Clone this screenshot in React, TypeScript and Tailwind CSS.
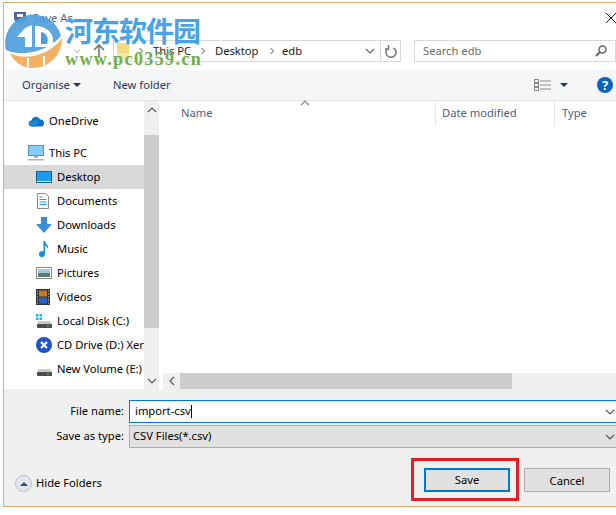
import type { ReactNode } from 'react'

const FONT = "font-['Noto_Sans','Open_Sans',sans-serif]"

function Chevron({ className = '' }: { className?: string }) {
  return (
    <svg viewBox="0 0 8 8" className={`h-2 w-2 shrink-0 ${className}`} fill="none" stroke="currentColor" strokeWidth="1">
      <path d="M2.500 1l3 3-3 3" />
    </svg>
  )
}

function DownChevron({ className = '' }: { className?: string }) {
  return (
    <svg viewBox="0 0 10 6" className={`h-[6px] w-[10px] shrink-0 ${className}`} fill="none" stroke="currentColor" strokeWidth="1.200">
      <path d="M1 1l4 4 4-4" />
    </svg>
  )
}

function Caret({ className = '' }: { className?: string }) {
  return (
    <svg viewBox="0 0 8 4" className={`h-1 w-2 shrink-0 ${className}`} fill="currentColor">
      <path d="M0 0h8L4 4z" />
    </svg>
  )
}

const CloudIcon = () => (
  <svg viewBox="0 0 16 12" className="h-3 w-4">
    <path d="M4 11.500a3 3 0 0 1-.5-6A4.500 4.500 0 0 1 12 4.500a3.500 3.500 0 0 1 4 3.500 3.500 3.500 0 0 1-3.500 3.500z" fill="#0e70c0" />
    <path d="M1 9.500a3 3 0 0 1 3.500-3 4 4 0 0 1 7 1L8 11.500H4A3 3 0 0 1 1 9.500z" fill="#1a86d6" />
  </svg>
)

const MonitorIcon = () => (
  <svg viewBox="0 0 16 16" className="h-4 w-4">
    <rect x="0.500" y="0.500" width="15" height="10" fill="#7fd0f7" stroke="#5f93b3" />
    <rect x="6" y="11" width="4" height="2" fill="#9db5c4" />
    <rect x="0" y="14" width="16" height="1.500" fill="#a9b7c2" />
  </svg>
)

const DesktopIcon = () => (
  <svg viewBox="0 0 16 12" className="h-3 w-4">
    <rect x="0.500" y="0.500" width="15" height="11" fill="#1b9af0" stroke="#14608f" />
    <rect x="1" y="10" width="14" height="1" fill="#e3f3fd" />
  </svg>
)

const DocumentsIcon = () => (
  <svg viewBox="0 0 14 16" className="h-4 w-[14px]">
    <path d="M1.500 0.500h8l3 3v12h-11z" fill="#fff" stroke="#8a8a8a" />
    <path d="M3.500 4h3M3.500 6.500h7M3.500 9h7M3.500 11.500h7" stroke="#2b9ad8" strokeWidth="1" />
  </svg>
)

const DownloadsIcon = () => (
  <svg viewBox="0 0 16 16" className="h-4 w-4">
    <path d="M5 0h6v7h5l-8 9-8-9h5z" fill="#3b8fd9" />
  </svg>
)

const MusicIcon = () => (
  <svg viewBox="0 0 16 16" className="h-4 w-4">
    <path d="M7.500 0h1.500c.5 3 4 4 3 8-.5-2-2-3-3-3.500V13a3 3 0 1 1-1.500-2.500z" fill="#1090e0" />
  </svg>
)

const PicturesIcon = () => (
  <svg viewBox="0 0 16 12" className="h-3 w-4">
    <rect x="0.500" y="0.500" width="15" height="11" fill="#fff" stroke="#8a8a8a" />
    <rect x="2" y="2" width="12" height="4" fill="#a9c6d8" />
    <rect x="2" y="6" width="12" height="4" fill="#55806a" />
  </svg>
)

const VideosIcon = () => (
  <svg viewBox="0 0 14 16" className="h-4 w-[14px]">
    <rect width="14" height="16" fill="#333" />
    <rect x="3" y="1.500" width="8" height="6" fill="#c57a2a" />
    <rect x="3" y="8.500" width="8" height="6" fill="#2a63c5" />
    <path d="M1 2h1M1 5h1M1 8h1M1 11h1M1 14h1M12 2h1M12 5h1M12 8h1M12 11h1M12 14h1" stroke="#ddd" strokeWidth="1.200" />
  </svg>
)

const DiskIcon = ({ windows = false }: { windows?: boolean }) => (
  <svg viewBox="0 0 16 14" className="h-[14px] w-4">
    {windows && <path d="M0 0h2.500v2.500H0zM3.500 0H6v2.500H3.500zM0 3.500h2.500V6H0zM3.500 3.500H6V6H3.500z" fill="#1fb0e8" />}
    <path d="M3 7h11l2 3H1z" fill="#c9c9c9" />
    <rect x="1" y="10" width="15" height="4" rx="1" fill="#4c4c4c" />
    <rect x="11" y="11.500" width="2" height="1" fill="#4fdc5a" />
  </svg>
)

const XeroIcon = () => (
  <svg viewBox="0 0 16 16" className="h-4 w-4">
    <circle cx="8" cy="8" r="8" fill="#2053c8" />
    <path d="M5 5l6 6M11 5l-6 6" stroke="#fff" strokeWidth="2.200" />
  </svg>
)

function NavRow({
  icon,
  label,
  indent = 'sub',
  selected = false,
}: {
  icon: ReactNode
  label: string
  indent?: 'root' | 'sub'
  selected?: boolean
}) {
  return (
    <div className={`flex h-6 items-center overflow-hidden ${indent === 'root' ? 'pl-6' : 'pl-8'} ${selected ? 'bg-[#d9d9d9]' : ''}`}>
      <span className="flex w-[21px] shrink-0 items-center">{icon}</span>
      <span className="whitespace-nowrap text-black">{label}</span>
    </div>
  )
}

// site watermark pasted over the top-left corner of the screenshot
function Watermark() {
  return (
    <div className="pointer-events-none absolute left-[4px] top-[14px] flex items-start gap-[3px]">
      <svg viewBox="0 0 58 54" className="h-[54px] w-[58px]">
        <path d="M2 36A28 28 0 1 1 57 22C45 36 20 44 2 36z" fill="#4f9fdb" fillOpacity="0.92" />
        <path d="M13 23l8-9 7-3v22h-7V23z" fill="#fff" />
        <path d="M31 12c14 0 21 10 17 21H31z" fill="#fff" />
        <path d="M37 18c6 1 8 7 6 12h-6z" fill="#4f9fdb" />
        <path d="M6 39C20 47 45 42 58 24 58 42 44 54 29 54 18 54 10 48 6 39z" fill="#f2ab55" fillOpacity="0.92" />
        <path d="M23 44h2v9h-2zM39 42h2v9h-2z" fill="#fff" />
      </svg>
      <div className="flex flex-col">
        <span className="text-[28px] font-bold leading-[32px] tracking-[-1px] text-[#49a2e3] font-['Noto_Sans_CJK_SC',sans-serif]">河东软件园</span>
        <span className="mt-[4px] text-[18px] font-bold leading-[18px] tracking-[1.4px] text-[#6eaf45] font-['Liberation_Serif',serif]">www.pc0359.cn</span>
      </div>
    </div>
  )
}

export default function App() {
  return (
    <div className={`relative h-[515px] w-[616px] overflow-hidden bg-white pl-[3px] pt-[2px] text-[11.2px] ${FONT}`}>
      <div className="flex h-[505px] flex-col border-b border-l border-t border-[#e3ad6c] bg-white">
        {/* title bar */}
        <div className="flex h-[37px] items-start pl-[9px] pt-[7px]">
          <svg viewBox="0 0 14 14" className="mt-[1px] h-[14px] w-[14px]">
            <path d="M1 1h12v6c0 3-3 5-6 6-3-1-6-3-6-6z" fill="#4b6b9a" />
            <path d="M4 3h6v3H4z" fill="#fff" />
          </svg>
          <span className="ml-[6px] text-[#5b6470]">Save As</span>
          <svg viewBox="0 0 10 10" className="ml-auto mt-[3px] h-[10px] w-[10px]" stroke="#111" strokeWidth="1" fill="none">
            <path d="M0 0l10 10M10 0L0 10" />
          </svg>
        </div>

        {/* address row */}
        <div className="flex h-[22px] items-center">
          <div className="flex w-[109px] shrink-0 items-center justify-end pr-[8px]">
            <Chevron className="mr-[12px] rotate-90 text-[#9a9a9a]" />
            <svg viewBox="0 0 12 14" className="h-[14px] w-3" fill="none" stroke="#6d6d6d" strokeWidth="1.500">
              <path d="M6 14V1M1 6l5-5 5 5" />
            </svg>
          </div>
          <div className="flex h-full w-[288px] shrink-0 items-center border border-[#d9d9d9] bg-white text-[#1a1a1a]">
            <svg viewBox="0 0 12 16" className="ml-[3px] h-4 w-3 shrink-0">
              <rect width="12" height="16" fill="#f7da7f" />
              <rect x="0" y="10" width="12" height="6" fill="#fbe9ac" />
            </svg>
            <Chevron className="ml-[8px] text-[#555]" />
            <span className="ml-[8px] w-[46px] whitespace-nowrap">This PC</span>
            <Chevron className="text-[#555]" />
            <span className="ml-[8px] w-[53px]">Desktop</span>
            <Chevron className="text-[#555]" />
            <span className="ml-[6px]">edb</span>
            <DownChevron className="ml-auto mr-[5px] text-[#666]" />
            <div className="flex h-full w-[20px] items-center justify-center border-l border-[#d9d9d9]">
              <svg viewBox="0 0 12 13" className="h-[13px] w-3" fill="none" stroke="#777" strokeWidth="1.500">
                <path d="M3.500 3A5 5 0 1 0 8.500 3M3.500 0v4H0" />
              </svg>
            </div>
          </div>
          <div className="ml-[13px] flex h-full flex-1 items-center border border-[#d9d9d9] bg-white pl-[8px] pr-[8px] text-[#6d6d6d]">
            <span>Search edb</span>
            <svg viewBox="0 0 12 12" className="ml-auto h-3 w-3" fill="none" stroke="#666" strokeWidth="1.500">
              <circle cx="7.500" cy="4.500" r="3.500" />
              <path d="M5 7l-4 4" strokeWidth="2" />
            </svg>
          </div>
        </div>

        {/* toolbar */}
        <div className="mt-[8px] flex h-[31px] items-center border-b border-[#e5e5e5] bg-[#f5f6f7] pl-[18px] pr-[3px] text-[#1e395b]">
          <span className="w-[51px]">Organise</span>
          <Caret />
          <span className="ml-[32px]">New folder</span>
          <svg viewBox="0 0 17 12" className="ml-auto h-3 w-[17px]" fill="none" stroke="#8a8a8a" strokeWidth="1">
            <rect x="0.500" y="0.500" width="4" height="3" />
            <rect x="0.500" y="4.500" width="4" height="3" />
            <rect x="0.500" y="8.500" width="4" height="3" />
            <path d="M6 2h11M6 6h11M6 10h11" />
          </svg>
          <Caret className="ml-[9px]" />
          <span className="ml-[29px] flex h-4 w-4 items-center justify-center rounded-full bg-[#0a64bf] text-[13px] font-bold leading-none text-white">?</span>
        </div>

        {/* panes */}
        <div className="flex min-h-0 flex-1">
          <div className="flex w-[140px] shrink-0 flex-col overflow-hidden pt-[8px]">
            <NavRow indent="root" icon={<CloudIcon />} label="OneDrive" />
            <div className="h-2 shrink-0" />
            <NavRow indent="root" icon={<MonitorIcon />} label="This PC" />
            <NavRow icon={<DesktopIcon />} label="Desktop" selected />
            <NavRow icon={<DocumentsIcon />} label="Documents" />
            <NavRow icon={<DownloadsIcon />} label="Downloads" />
            <NavRow icon={<MusicIcon />} label="Music" />
            <NavRow icon={<PicturesIcon />} label="Pictures" />
            <NavRow icon={<VideosIcon />} label="Videos" />
            <NavRow icon={<DiskIcon windows />} label="Local Disk (C:)" />
            <NavRow icon={<XeroIcon />} label="CD Drive (D:) Xero" />
            <NavRow icon={<DiskIcon />} label="New Volume (E:)" />
          </div>

          {/* nav scrollbar */}
          <div className="flex w-[15px] shrink-0 flex-col bg-[#f0f0f0]">
            <div className="flex h-[17px] items-center justify-center text-[#555]">
              <DownChevron className="rotate-180" />
            </div>
            <div className="mt-[17px] h-[193px] bg-[#cdcdcd]" />
            <div className="mt-auto flex h-[17px] items-center justify-center text-[#555]">
              <DownChevron />
            </div>
          </div>

          {/* file list */}
          <div className="ml-[4px] flex min-w-0 flex-1 flex-col">
            <div className="relative flex h-[25px] items-center text-[#4c607a]">
              <span className="absolute left-[137px] top-[-1px]">
                <DownChevron className="h-[4px] w-[7px] rotate-180 text-[#888]" />
              </span>
              <div className="flex h-full w-[273px] shrink-0 items-center border-r border-[#e5e5e5] pl-[18px]">Name</div>
              <div className="flex h-full w-[119px] shrink-0 items-center border-r border-[#e5e5e5] pl-[6px]">Date modified</div>
              <div className="pl-[7px]">Type</div>
            </div>
            <div className="flex-1" />
            <div className="flex h-[16px] items-center bg-[#f0f0f0]">
              <div className="flex w-[17px] items-center justify-center text-[#555]">
                <DownChevron className="rotate-90" />
              </div>
              <div className="h-full w-[332px] bg-[#cdcdcd]" />
            </div>
          </div>
        </div>

        {/* bottom form */}
        <div className="flex h-[117px] flex-col bg-[#f0f0f0]">
          <div className="mt-[11px] flex h-[23px] items-center">
            <span className="w-[120px] shrink-0 text-right text-black">File name:</span>
            <div className="ml-[5px] flex h-full flex-1 items-center border-y border-l border-[#0078d7] bg-white pl-[5px] pr-[1px] text-black">
              <span>import-csv</span>
              <span className="h-[13px] w-px bg-black" />
              <DownChevron className="ml-auto text-[#555]" />
            </div>
          </div>
          <div className="mt-[2px] flex h-[23px] items-center">
            <span className="w-[120px] shrink-0 text-right text-black">Save as type:</span>
            <div className="ml-[5px] flex h-full flex-1 items-center border-y border-l border-[#adadad] bg-[#e1e1e1] pl-[3px] pr-[1px] text-black">
              <span>CSV Files(*.csv)</span>
              <DownChevron className="ml-auto text-[#555]" />
            </div>
          </div>
          <div className="mt-[10px] flex items-start pr-[6px]">
            <div className="ml-[11px] mt-[17px] flex items-center">
              <span className="flex h-[17px] w-[17px] items-center justify-center rounded-full border border-[#b5bcc4] bg-[#e3e8ee]">
                <Caret className="rotate-180 text-[#1e4f8f]" />
              </span>
              <span className="ml-[4px] text-black">Hide Folders</span>
            </div>
            <div className="ml-auto flex h-[43px] w-[108px] shrink-0 items-center justify-center border-[3px] border-[#ed1c24] pl-[4px]">
              <div className="flex h-[24px] w-[86px] shrink-0 items-center justify-center border-2 border-[#0078d7] bg-[#e1e1e1] pt-[2px] text-black">Save</div>
            </div>
            <div className="ml-[5px] mt-[10px] flex h-[24px] w-[86px] items-center justify-center border border-[#adadad] bg-[#e1e1e1] pt-[2px] text-black">Cancel</div>
          </div>
        </div>
      </div>
      <Watermark />
    </div>
  )
}
